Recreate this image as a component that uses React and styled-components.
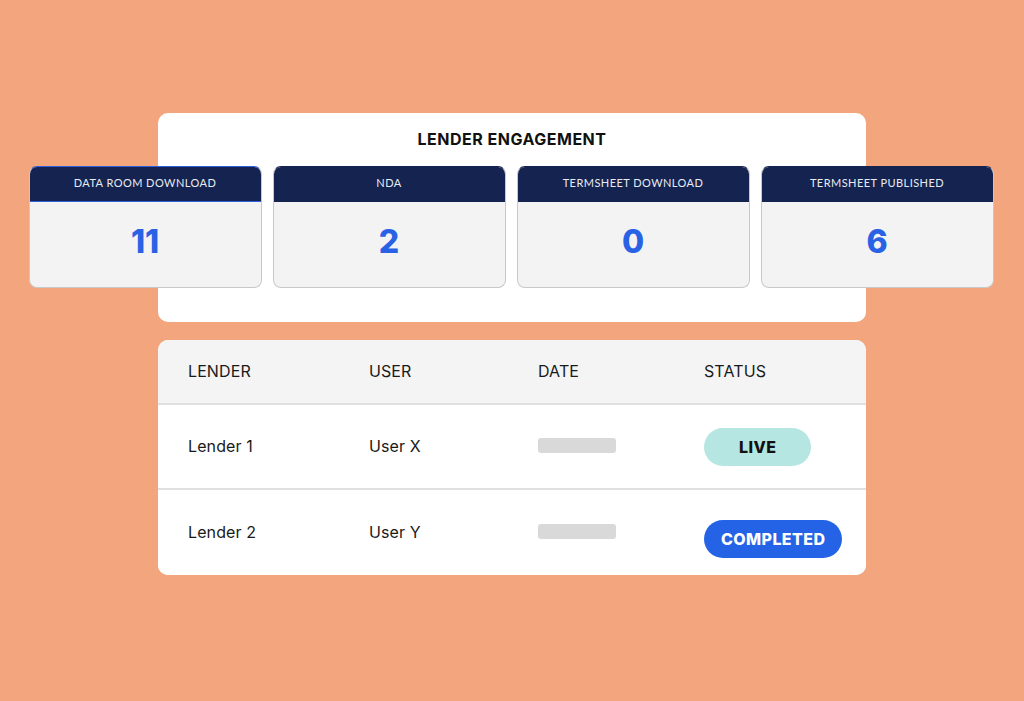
import styled, { createGlobalStyle } from "styled-components";

const GlobalStyle = createGlobalStyle`
  body {
    margin: 0;
    background: #f3a57d;
    font-family: "Lato", "Liberation Sans", sans-serif;
  }
`;

const Page = styled.main`
  display: flex;
  flex-direction: column;
  align-items: center;
  gap: 18px;
  padding-top: 113px;
  min-height: 701px;
  box-sizing: border-box;
`;

const Panel = styled.section`
  width: 708px;
  background: #ffffff;
  border-radius: 10px;
  box-sizing: border-box;
  overflow: ${(props) => (props.$clip ? "hidden" : "visible")};
`;

const EngagementPanel = styled(Panel)`
  padding: 17px 0 34px;
  display: flex;
  flex-direction: column;
  align-items: center;
`;

const Title = styled.h2`
  margin: 0 0 18px;
  font-family: "Inter", "Liberation Sans", sans-serif;
  font-size: 16px;
  line-height: 18px;
  font-weight: 700;
  letter-spacing: 0.5px;
  color: #111111;
`;

const StatRow = styled.div`
  display: grid;
  grid-template-columns: repeat(4, 233px);
  gap: 11px;
  margin-left: -2px;
`;

const StatCard = styled.div`
  display: flex;
  flex-direction: column;
  height: 122px;
  border-radius: 8px;
  border: 1px solid #c8c8c8;
  border-top-color: ${(props) => (props.$active ? "#2d5fe0" : "#14234f")};
  background: #f3f3f3;
  overflow: hidden;
  box-sizing: border-box;
`;

const StatHeader = styled.div`
  height: 36px;
  display: flex;
  align-items: center;
  justify-content: center;
  padding-bottom: 2px;
  box-sizing: border-box;
  background: #14234f;
  color: #e8ebf3;
  font-size: 11px;
  letter-spacing: 0.45px;
  margin: -1px -1px 0;
  border-bottom: 1px solid ${(props) => (props.$active ? "#2d5fe0" : "#14234f")};
`;

const StatValue = styled.div`
  flex: 1;
  display: flex;
  align-items: center;
  justify-content: center;
  padding-bottom: 6px;
  font-family: "Inter", "Liberation Sans", sans-serif;
  font-size: 32px;
  font-weight: 800;
  color: #2a62e6;
`;

const TableRow = styled.div`
  display: grid;
  grid-template-columns: 181px 169px 166px 1fr;
  align-items: center;
  height: ${(props) => (props.$head ? "65px" : "85px")};
  box-sizing: border-box;
  padding-left: 30px;
  padding-bottom: ${(props) => (props.$head ? "2px" : "2px")};
  background: ${(props) => (props.$head ? "#f4f4f4" : "#ffffff")};
  border-bottom: ${(props) => (props.$last ? "none" : "2px solid #e0e0e0")};
  color: #1a1a1a;
  font-family: "Inter", "Liberation Sans", sans-serif;
  font-size: 16px;
  letter-spacing: 0.1px;
`;

const Cell = styled.div`
  padding-top: ${(props) => props.$shift || 0}px;
`;

const DateBar = styled.div`
  width: 78px;
  height: 15px;
  border-radius: 3px;
  background: #d9d9d9;
`;

const Badge = styled.span`
  display: inline-flex;
  align-items: center;
  justify-content: center;
  height: 38px;
  padding: 0 ${(props) => (props.$done ? "17px" : "35px")};
  border-radius: 19px;
  background: ${(props) => (props.$done ? "#2563e6" : "#b5e6e2")};
  color: ${(props) => (props.$done ? "#ffffff" : "#111111")};
  font-family: "Inter", "Liberation Sans", sans-serif;
  font-size: 16px;
  font-weight: 800;
  letter-spacing: 0.4px;
`;

const stats = [
  { label: "DATA ROOM DOWNLOAD", value: 11, active: true },
  { label: "NDA", value: 2 },
  { label: "TERMSHEET DOWNLOAD", value: 0 },
  { label: "TERMSHEET PUBLISHED", value: 6 },
];

const rows = [
  { lender: "Lender 1", user: "User X", status: "LIVE", shift: 2 },
  { lender: "Lender 2", user: "User Y", status: "COMPLETED", shift: 14 },
];

export default function App() {
  return (
    <>
      <GlobalStyle />
      <Page>
        <EngagementPanel>
          <Title>LENDER ENGAGEMENT</Title>
          <StatRow>
            {stats.map((s) => (
              <StatCard key={s.label} $active={s.active}>
                <StatHeader $active={s.active}>{s.label}</StatHeader>
                <StatValue>{s.value}</StatValue>
              </StatCard>
            ))}
          </StatRow>
        </EngagementPanel>

        <Panel $clip>
          <TableRow $head>
            <Cell>LENDER</Cell>
            <Cell>USER</Cell>
            <Cell>DATE</Cell>
            <Cell>STATUS</Cell>
          </TableRow>
          {rows.map((r, i) => (
            <TableRow key={r.lender} $last={i === rows.length - 1}>
              <Cell>{r.lender}</Cell>
              <Cell>{r.user}</Cell>
              <Cell>
                <DateBar />
              </Cell>
              <Cell $shift={r.shift}>
                <Badge $done={r.status === "COMPLETED"}>{r.status}</Badge>
              </Cell>
            </TableRow>
          ))}
        </Panel>
      </Page>
    </>
  );
}
